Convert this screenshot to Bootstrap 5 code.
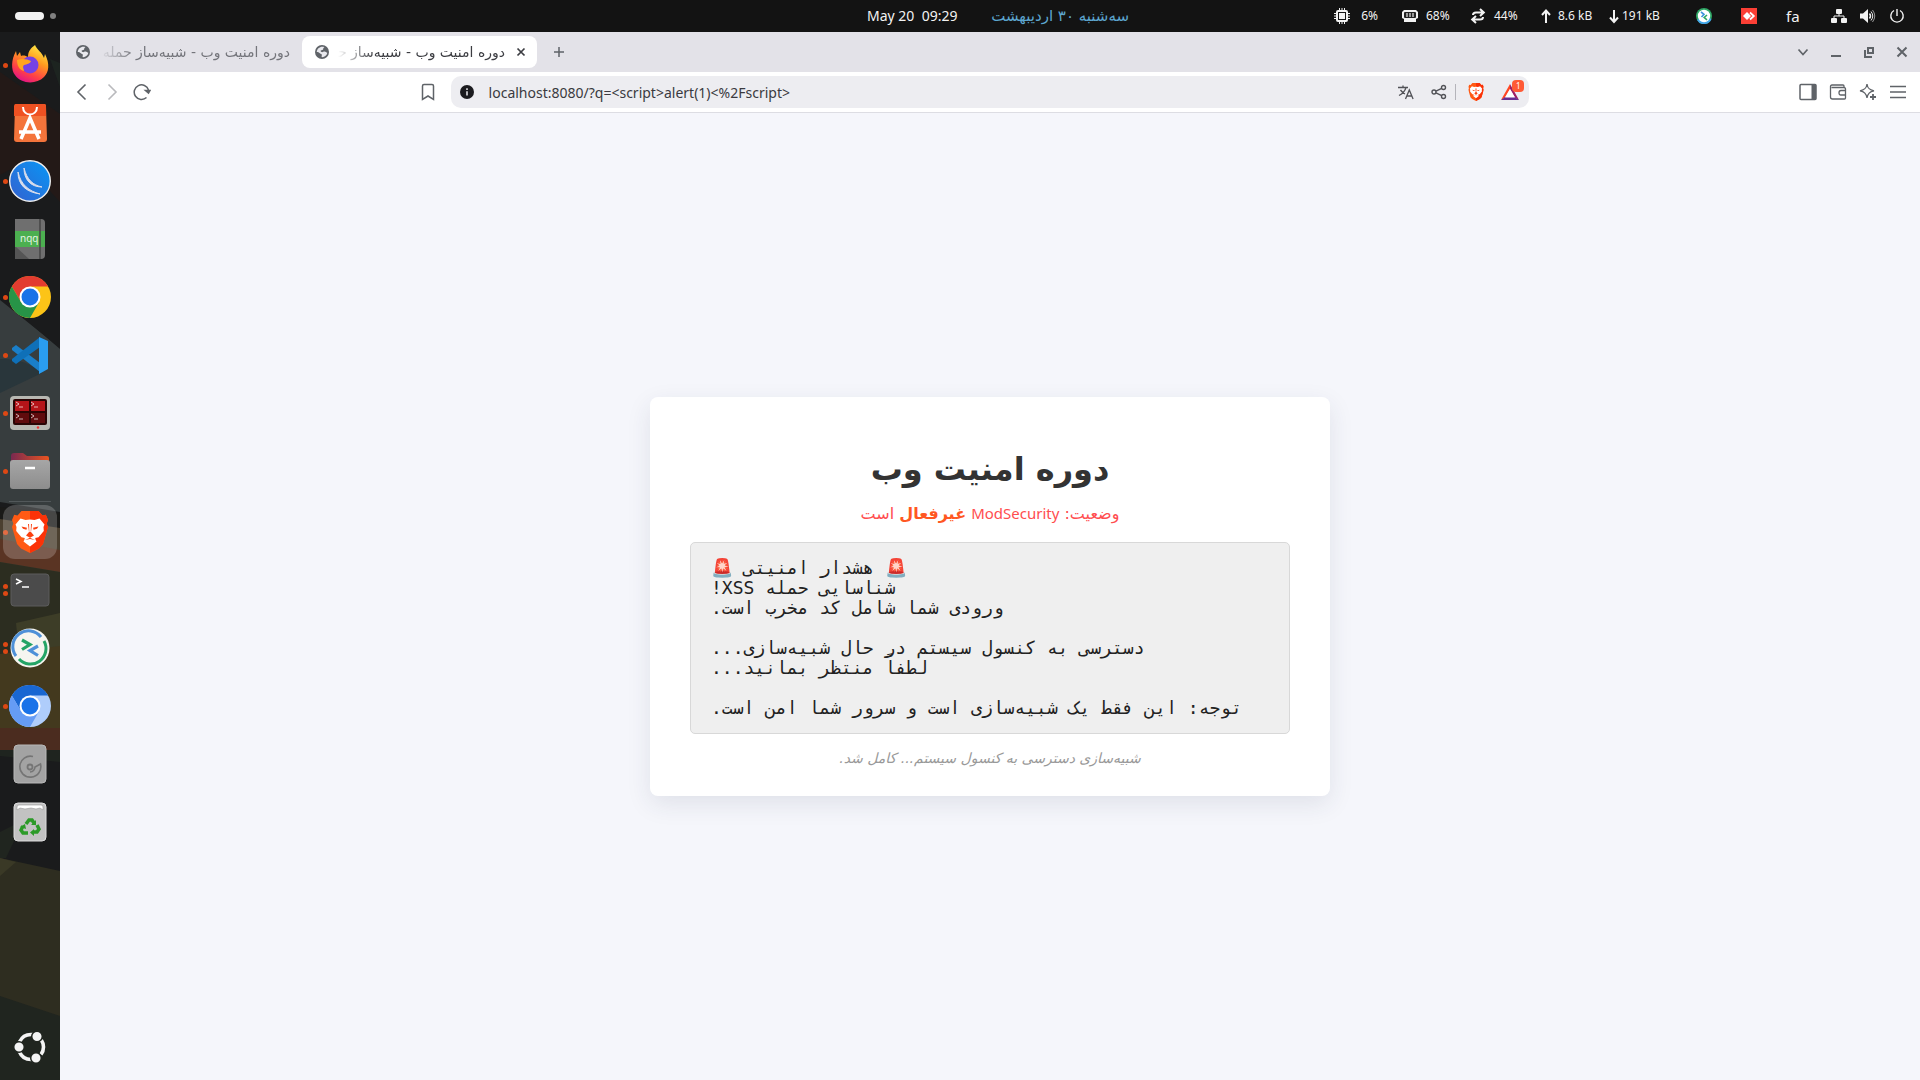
<!DOCTYPE html>
<html lang="fa">
<head>
<meta charset="utf-8">
<meta name="viewport" content="width=device-width, initial-scale=1">
<title>دوره امنیت وب</title>
<link href="https://cdn.jsdelivr.net/npm/bootstrap@5.3.0/dist/css/bootstrap.min.css" rel="stylesheet">
<style>
  body { font-family: "Noto Sans", "DejaVu Sans", sans-serif; background: #f5f6fb; overflow: hidden; }
  svg { display: block; flex: none; }
  button { border: 0; background: none; padding: 0; color: inherit; display: flex; align-items: center; justify-content: center; }

  /* system bar */
  .sysbar { height: 32px; background: #131313; color: #f2f2f2; font-size: 13px; line-height: 20px; }
  .ws-on { width: 29px; height: 8px; border-radius: 4px; background: #f2f2f2; margin-left: 15px; }
  .ws-off { width: 6px; height: 6px; border-radius: 50%; background: #808080; margin-left: 6px; }
  .clock { width: 262px; margin-right: 205px; font-size: 14px; }
  .clock-fa { color: #5da6cf; font-family: "DejaVu Sans", sans-serif; font-size: 15px; }
  .tray { width: 586px; font-size: 12px; }
  .stat { width: 68px; }
  .stat-wide { width: 90px; }
  .slot { width: 45px; }
  .slot-sm { width: 29px; }
  .lang { font-size: 15px; }

  /* dock */
  .dock { width: 60px; background: #1a1b1c; padding-top: 4px; }
  .dock-art { position: absolute; inset: 0; width: 100%; height: 100%; }
  .dock-item { height: 58px; width: 60px; position: relative; flex: none; }
  .dock-item.running::before, .dock-item.twice::before, .dock-item.twice::after {
    content: ""; position: absolute; left: 3px; top: 27px; width: 5px; height: 5px; border-radius: 50%; background: #dd4814; }
  .dock-item.twice::before { top: 23px; }
  .dock-item.twice::after { top: 30px; }
  .dock-rule { height: 1px; margin: 1px 9px; background: #52585a; position: relative; }
  .dock-item.current > svg { position: relative; }
  .current-bg { position: absolute; inset: 2px 3px; border-radius: 12px; background: rgba(255,255,255,.2); }

  /* browser */
  .tabstrip { height: 40px; background: #e3e2e8; color: #5f6368; }
  .win-controls { gap: 17px; margin-right: 10px; }
  .tab { height: 32px; border-radius: 8px; font: 14px/20px "DejaVu Sans", sans-serif; }
  .tab-idle { width: 234px; padding: 0 12px 0 8px; margin-left: 8px; color: #74757b; }
  .tab-live { width: 235px; padding: 0 8px 0 13px; background: #fff; color: #3c3d42; }
  .tab-text { overflow: hidden; white-space: nowrap; direction: rtl; flex: 1; min-width: 0; margin-left: 9px;
    -webkit-mask-image: linear-gradient(to right, transparent, #000 36px); mask-image: linear-gradient(to right, transparent, #000 36px); }
  .toolbar { height: 41px; background: #fff; border-bottom: 1px solid #dddde3; color: #5f6368; }
  .side { flex: 0 0 21%; gap: 12px; padding: 0 13px; }
  .omni { flex: 0 0 58%; height: 32px; border-radius: 10px; background: #ededf1; padding: 0 10px 0 8px; color: #515257; }
  .omni input { border: 0; background: none; outline: 0; flex: 1; min-width: 0; padding: 0; margin-left: 14px; font-size: 14px; color: #3a3a40; }
  .omni-rule { width: 1px; height: 16px; background: #b4b4ba; }
  .shield { margin: 0 17px 0 12px; }
  .bat { position: relative; }
  .bat-count { position: absolute; left: 11px; top: -4px; width: 12px; height: 12px; border-radius: 4px; background: #ff5a36; color: #fff; font-size: 8px; line-height: 12px; text-align: center; }

  /* page */
  .panel { width: 680px; border: 0; border-radius: 8px; padding: 52px 40px 26px; box-shadow: 0 8px 24px rgba(40,45,80,.1); font-family: "DejaVu Sans", sans-serif; }
  .panel h1 { font-size: 32px; line-height: 40px; font-weight: 700; color: #333; margin-bottom: 12px; }
  .state { font-size: 16px; line-height: 24px; color: #ff4d4f; margin-bottom: 16px; }
  .state b { color: #ff5722; }
  .state bdi { font-family: "Noto Sans", sans-serif; font-size: 15px; }
  .console { direction: rtl; text-align: left; font: 18px/20px "DejaVu Sans Mono", monospace; color: #222; background: #efefef; border: 1px solid #d8d8d8; border-radius: 5px; padding: 15px 20px; margin-bottom: 12px; overflow: hidden; }
  .done { font-size: 14px; line-height: 24px; color: #999; font-style: italic; }
</style>
<script src="https://cdn.jsdelivr.net/npm/bootstrap@5.3.0/dist/js/bootstrap.bundle.min.js"></script>
</head>
<body class="vh-100 d-flex flex-column">

<svg width="0" height="0" class="position-absolute" aria-hidden="true">
  <symbol id="globe" viewBox="0 0 16 16"><circle cx="8" cy="8" r="8" fill="#5f6368"/><path d="M2 8c1.500 0 2.500.5 3.500 1.500s2.300.5 2.300 2-.8 2.200.4 2.500c3-.2 5.500-2.500 5.900-5.200-1.300 0-1.800-1.300-3.200-1.300S8.600 8.600 7.400 8 6 6.300 7.400 6s2-.4 2-1.600.8-1.600 1.400-1.900C6.500.8 2.200 4 2 8z" fill="#e9e9ee"/></symbol>
  <symbol id="lion" viewBox="0 0 36 42"><path d="M9.500 0h17l4 4.500 3.300-.7L36 9l-1.300 3.500L36 16l-5 17-4 4.500-9 4.500-9-4.500L5 33 0 16l1.300-3.500L0 9l2.200-5.200 3.300.7z" fill="#ff5a14"/><path d="M18 0h8.500l4 4.500 3.300-.7L36 9l-1.300 3.500L36 16l-5 17-4 4.500-9 4.500z" fill="#fb3208"/><path d="M18 8.500l4.500.6 5-1.600 5 6-1 2.500.3 4-5.300 6.300-3.300.7.500 2 .8 1.500-6.500 5-6.500-5 .8-1.500.5-2-3.300-.7L4.200 20l.3-4-1-2.500 5-6 5 1.600z" fill="#fff"/><path d="M9.500 15.500l5.500 1.300-.6 2-3.400-1zM26.500 15.500L21 16.800l.6 2 3.400-1zM16 13h4l-1 8 3 3.500-4 2.300-4-2.300 3-3.500zM13 29l5-2.200 5 2.200-5-1z" fill="#fb4010"/><path d="M17 12h2l-.3 9h-1.400z" fill="#fff"/></symbol>
</svg>

<header class="sysbar d-flex align-items-center flex-shrink-0">
  <div class="d-flex align-items-center flex-grow-1"><span class="ws-on"></span><span class="ws-off"></span></div>
  <div class="clock d-flex justify-content-between">
    <span>May 20 &nbsp;09:29</span><span class="clock-fa" dir="rtl">سه‌شنبه ۳۰ اردیبهشت</span>
  </div>
  <div class="tray d-flex align-items-center">
    <div class="stat d-flex align-items-center"><svg width="16" height="16" viewBox="0 0 16 16"><path d="M5.500 0v16M8 0v16M10.500 0v16M0 5.500h16M0 8h16M0 10.500h16" stroke="#f2f2f2"/><rect x="2" y="2" width="12" height="12" rx="2" fill="#f2f2f2"/><rect x="4" y="4" width="8" height="8" fill="#131313"/><rect x="5" y="5" width="6" height="6" fill="#f2f2f2"/></svg><span class="ms-auto me-4">6%</span></div>
    <div class="stat d-flex align-items-center"><svg width="16" height="16" viewBox="0 0 16 16"><path d="M2 2h12l2 2v6l-2 1v3H2v-3l-2-1V4z" fill="#f2f2f2"/><rect x="2" y="4" width="12" height="6" rx="1" fill="#222"/><path d="M5 5v4M8 5v4M11 5v4" stroke="#999" stroke-width="2"/></svg><span class="ms-2">68%</span></div>
    <div class="stat d-flex align-items-center"><svg width="16" height="16" viewBox="0 0 16 16" fill="none" stroke="#f2f2f2" stroke-width="2"><path d="M3 7c0-2 1-2.500 3-2.500h8M10 1l3.800 3.500L10 8M13 9c0 2-1 2.500-3 2.500H2M6 8l-3.800 3.500L6 15"/></svg><span class="ms-2">44%</span></div>
    <div class="stat d-flex align-items-center"><svg width="16" height="16" viewBox="0 0 16 16" fill="none" stroke="#f2f2f2" stroke-width="2"><path d="M8 15V3M4 7l4-4.500L12 7"/></svg><span class="ms-1 text-nowrap">8.6 kB</span></div>
    <div class="stat-wide d-flex align-items-center"><svg width="16" height="16" viewBox="0 0 16 16" fill="none" stroke="#f2f2f2" stroke-width="2"><path d="M8 2v12M4 9.500L8 14l4-4.500"/></svg><span class="text-nowrap">191 kB</span></div>
    <div class="slot"><svg width="16" height="16" viewBox="0 0 16 16"><circle cx="8" cy="8" r="8" fill="#2fa866"/><path d="M1 12a8 8 0 0 0 14.500-1L8 8z" fill="#43a5e8"/><circle cx="8" cy="8" r="6.200" fill="#fff"/><path d="M5 4l3 2.300L5.500 9" fill="none" stroke="#3e94dc" stroke-width="1.600"/><path d="M11 7L8.200 9.500l2.800 2.300" fill="none" stroke="#2fa866" stroke-width="1.600"/></svg></div>
    <div class="slot"><svg width="16" height="16" viewBox="0 0 16 16"><path d="M0 0h16v16H0z" fill="#fb3f35"/><path d="M2 8l4-4 4 4-4 4z" fill="#fff"/><path d="M9 4.500L12.800 8 9 11.500" fill="none" stroke="#fff" stroke-width="1.800"/></svg></div>
    <div class="slot lang">fa</div>
    <div class="slot-sm"><svg width="16" height="16" viewBox="0 0 16 16" fill="#f2f2f2"><rect x="5" y="1" width="6" height="5" rx="1"/><rect x="0" y="10" width="6" height="5" rx="1"/><rect x="10" y="10" width="6" height="5" rx="1"/><path d="M3 10V8h10v2M8 5v3" fill="none" stroke="#f2f2f2"/></svg></div>
    <div class="slot-sm"><svg width="16" height="16" viewBox="0 0 16 16" fill="none" stroke="#f2f2f2"><path d="M0 5.500h3L8 1v14l-5-4.500H0z" fill="#f2f2f2" stroke="none"/><path d="M9.500 5.500q2 2.500 0 5" stroke-width="1.500"/><path d="M11 3.500q3.500 4.500 0 9"/><path d="M12.500 2q4.500 6 0 12" opacity=".6"/></svg></div>
    <svg width="16" height="16" viewBox="0 0 16 16" fill="none" stroke="#f2f2f2" stroke-width="1.400"><path d="M5 2.500a6.200 6.200 0 1 0 6 0M8 1v7"/></svg>
  </div>
</header>

<div class="d-flex flex-grow-1 overflow-hidden">
  <nav class="dock position-relative d-flex flex-column flex-shrink-0" aria-label="Dock">
    <svg class="dock-art" viewBox="0 0 60 1048" preserveAspectRatio="none" aria-hidden="true">
      <path d="M0 0h60v1048H0z" fill="#1a1b1c"/><path d="M50 27l10 4v24z" fill="#1d2420"/>
      <path d="M0 40l60 42v88L24 130 0 143z" fill="#231917"/><path d="M0 268l60 48v164L0 470z" fill="#373d3e"/>
      <path d="M26 288h34v29z" fill="#1a1b1c"/><path d="M0 327q25-1 42 14L0 361z" fill="#29363b"/>
      <path d="M0 475l60 6v20L0 489z" fill="#1a1a18"/><path d="M0 487l60 9v80H0z" fill="#4b4030"/><path d="M0 507l60 11v22L0 530z" fill="#5a3423"/>
      <path d="M0 530l60 10v95H0z" fill="#2c2d20"/><path d="M16 591l44-10v50H20z" fill="#3d3d27"/>
      <path d="M0 622l60-8v82H0z" fill="#43391e"/><path d="M0 696h60v22L0 722z" fill="#4b2c1f"/>
      <path d="M0 718h60v12L0 724z" fill="#1f241f"/><path d="M0 800l24-12L6 826H0z" fill="#20251f"/>
      <path d="M0 826l60 13v150L0 968z" fill="#2e2d20"/><path d="M0 826l16 4L0 844z" fill="#3a3926"/><path d="M0 964l60 20v64H0z" fill="#20251f"/>
    </svg>
    <button class="dock-item running" aria-label="Firefox"><svg width="42" height="42" viewBox="0 0 42 42"><defs><linearGradient id="ff" x1=".8" y1="0" x2=".3" y2="1"><stop offset="0" stop-color="#fff14a"/><stop offset=".4" stop-color="#ff9a1f"/><stop offset=".75" stop-color="#ff3f47"/><stop offset="1" stop-color="#e0128a"/></linearGradient></defs><path d="M26 1c2 5 7 7 9 13l1-4c5 10 4 18-1 23-8 8-23 7-29-2C2 26 2 16 7 7l1 5 3-4 1 4c3-1 5 0 7 1 0-6 3-9 7-12z" fill="url(#ff)"/><circle cx="21" cy="21" r="8.500" fill="#7542e5"/><path d="M8 16c5-2 10-1 14 1-1 3-4 3-7 4-2 2 0 4 0 6-5-1-7-6-7-11z" fill="#ffa51e"/></svg></button>
    <button class="dock-item" aria-label="App Center"><svg width="42" height="42" viewBox="0 0 42 42"><path d="M7 2h28q2 0 2 2l1 33q0 3-3 3H8q-3 0-3-3L6 4q0-2 1-2z" fill="#f4743b"/><path d="M7 2h28q2 0 2 2v10H5V4q0-2 2-2z" fill="#ef5122"/><path d="M14 5c0 10 14 10 14 0" fill="none" stroke="#fff" stroke-width="2"/><path d="M12 37l9-21 9 21M10 30h22" fill="none" stroke="#fff" stroke-width="3.500"/></svg></button>
    <button class="dock-item running" aria-label="Winbox"><svg width="42" height="42" viewBox="0 0 42 42"><defs><linearGradient id="wb" x1="1" y1="0" x2="0" y2="1"><stop stop-color="#0897f5"/><stop offset="1" stop-color="#3460cf"/></linearGradient></defs><circle cx="21" cy="21" r="20.300" fill="url(#wb)" stroke="#eee" stroke-width="1.400"/><path d="M9 12c0 13 8 20 22 22C20 31 12 25 9 12zM15 8c0 12 7 19 18 19C24 25 18 20 15 8z" fill="#d8ddec" stroke="#d8ddec"/></svg></button>
    <button class="dock-item" aria-label="Notepadqq"><svg width="42" height="42" viewBox="0 0 42 42"><path d="M6 1h26q4 0 4 4v32q0 4-4 4H6z" fill="#6f6f6f"/><path d="M6 28l14 13H6z" fill="#555"/><path d="M6 13h30v16H6z" fill="#4caf50"/><path d="M31 1v40" stroke="#444" stroke-width="1.500"/><text x="11" y="24" font-family="Noto Sans" font-size="10" fill="#e5f5e5">nqq</text></svg></button>
    <button class="dock-item running" aria-label="Chrome"><svg width="42" height="42" viewBox="0 0 42 42"><circle cx="21" cy="21" r="21" fill="#fcc417"/><path d="M2.800 10.500A21 21 0 0 1 39.200 10.500H21L12 26z" fill="#e23c30"/><path d="M2.800 10.500A21 21 0 0 0 21 42l9.100-15.800L12 26z" fill="#279447"/><circle cx="21" cy="21" r="10.500" fill="#fff"/><circle cx="21" cy="21" r="8.500" fill="#1a73e8"/></svg></button>
    <button class="dock-item running" aria-label="VS Code"><svg width="42" height="42" viewBox="0 0 42 42"><path d="M3 14l4-3 24 18v9L3 16z" fill="#1a7fc9"/><path d="M3 27l4 3 24-17V3L3 25z" fill="#0f70b8"/><path d="M30 3l9 4v28l-9 5z" fill="#2a9df0"/></svg></button>
    <button class="dock-item running" aria-label="Terminator"><svg width="42" height="42" viewBox="0 0 42 42"><rect x="1" y="4" width="40" height="34" rx="4" fill="#b8b8b2"/><rect x="4" y="7" width="34" height="26" rx="2" fill="#2a0505"/><path d="M6 9h14v10H6zM22 9h14v10H22z" fill="#b51419"/><path d="M6 21h14v10H6zM22 21h14v10H22z" fill="#600b0d"/><path d="M7 10l3 2-3 2m3 1h4M22 10l3 2-3 2m3 1h4M7 22l3 2-3 2m3 1h4M22 22l3 2-3 2m3 1h4" fill="none" stroke="#fff" stroke-width=".8" opacity=".85"/><circle cx="29" cy="35.500" r="1.200" fill="#e33"/></svg></button>
    <button class="dock-item running" aria-label="Files"><svg width="42" height="42" viewBox="0 0 42 42"><defs><linearGradient id="fo"><stop stop-color="#7a2950"/><stop offset="1" stop-color="#e95420"/></linearGradient><linearGradient id="gr" x2="0" y2="1"><stop stop-color="#a6a6a6"/><stop offset="1" stop-color="#8d8d8d"/></linearGradient></defs><path d="M2 6q0-3 3-3h9l4 3h20q2 0 2 2v10H2z" fill="url(#fo)"/><rect x="1" y="10" width="40" height="29" rx="3" fill="url(#gr)"/><path d="M16 18h10" stroke="#fff" stroke-width="2.500"/></svg></button>
    <div class="dock-rule flex-shrink-0"></div>
    <button class="dock-item current running" aria-label="Brave"><span class="current-bg"></span><svg width="36" height="42"><use href="#lion"/></svg></button>
    <button class="dock-item twice" aria-label="Terminal"><svg width="42" height="42" viewBox="0 0 42 42"><rect x="2" y="5" width="38" height="32" rx="3" fill="#4b4b4b" stroke="#5c5c5c"/><path d="M7 10l5 2.500L7 15M13 18h7" fill="none" stroke="#fff" stroke-width="1.500"/></svg></button>
    <button class="dock-item twice" aria-label="Remmina"><svg width="42" height="42" viewBox="0 0 42 42"><circle cx="21" cy="21" r="19.500" fill="#f6f5f0"/><path d="M7 29A15.500 15.500 0 0 1 32 10" fill="none" stroke="#4e90d8" stroke-width="3"/><path d="M35 14A15.500 15.500 0 0 1 10 32" fill="none" stroke="#24a466" stroke-width="3"/><path d="M13 13l8 4.500-8 5" fill="none" stroke="#24a466" stroke-width="3.200"/><path d="M29 19l-8 4.500 8 5" fill="none" stroke="#4e90d8" stroke-width="3.200"/></svg></button>
    <button class="dock-item running" aria-label="Chromium"><svg width="42" height="42" viewBox="0 0 42 42"><circle cx="21" cy="21" r="21" fill="#afcdfb"/><path d="M2.800 10.500A21 21 0 0 1 39.200 10.500H21L12 26z" fill="#1967d2"/><path d="M2.800 10.500A21 21 0 0 0 21 42l9.100-15.800L12 26z" fill="#659cf5"/><circle cx="21" cy="21" r="10.500" fill="#fff"/><circle cx="21" cy="21" r="8.500" fill="#1a73e8"/></svg></button>
    <button class="dock-item" aria-label="Disk"><svg width="42" height="42" viewBox="0 0 42 42"><rect x="5" y="2" width="32" height="38" rx="4" fill="#a3a3a3" stroke="#b8b8b8"/><path d="M24 13.500A10.500 10.500 0 1 0 31.500 21L26 24A5.500 5.500 0 0 1 21 29" fill="none" stroke="#757575" stroke-width="1.600"/><circle cx="21" cy="24" r="2.500" fill="none" stroke="#757575" stroke-width="1.800"/></svg></button>
    <button class="dock-item" aria-label="Trash"><svg width="42" height="42" viewBox="0 0 42 42"><rect x="5" y="2" width="32" height="38" rx="4" fill="#c2c2c2" stroke="#ddd"/><path d="M8 9V6q0-2 2-2h22q2 0 2 2v3l-3-2-4 1-5-1-6 1-5-1z" fill="#fff" stroke="#999" stroke-width=".6"/><path d="M17 23l3-4h3l2 3M28 24l2 4-2 3h-3M19 32h-5l-2-3 2-4" fill="none" stroke="#2c9a28" stroke-width="3.500"/><path d="M22 24l5 0 0-5zM25 28v7l-4-3.500zM11 26l5-3 1 5z" fill="#2c9a28"/></svg></button>
    <button class="dock-item mt-auto mb-1" aria-label="Show apps"><svg width="32" height="32" viewBox="0 0 32 32"><g fill="none" stroke="#f4f4f4" stroke-width="3.600"><circle cx="17" cy="16" r="12.500" stroke-dasharray="16 10.180" stroke-dashoffset="8"/></g><g fill="#f4f4f4" stroke="#20251f" stroke-width="1.500"><circle cx="5" cy="16" r="5.300"/><circle cx="23" cy="5.500" r="5.300"/><circle cx="22" cy="27" r="5.300"/></g></svg></button>
  </nav>

  <div class="d-flex flex-column flex-grow-1">
    <div class="tabstrip d-flex align-items-center flex-shrink-0" role="tablist">
      <div class="tab tab-idle d-flex align-items-center" role="tab"><svg width="14" height="14"><use href="#globe"/></svg><span class="tab-text">دوره امنیت وب - شبیه‌ساز حمله</span></div>
      <div class="tab tab-live d-flex align-items-center" role="tab" aria-selected="true"><svg width="14" height="14"><use href="#globe"/></svg><span class="tab-text">دوره امنیت وب - شبیه‌ساز حمله</span><button class="ms-2" aria-label="Close tab"><svg width="16" height="16" viewBox="0 0 16 16" stroke="#3c3d42" stroke-width="1.700"><path d="M4.500 4.500l7 7m0-7l-7 7"/></svg></button></div>
      <button class="ms-3" aria-label="New tab"><svg width="12" height="12" viewBox="0 0 12 12" stroke="currentColor" stroke-width="1.500"><path d="M6 1v10M1 6h10"/></svg></button>
      <div class="win-controls d-flex align-items-center ms-auto">
        <button aria-label="Search tabs"><svg width="16" height="16" viewBox="0 0 16 16" fill="none" stroke="currentColor" stroke-width="1.700"><path d="M3.500 5.500L8 10.500l4.500-5"/></svg></button>
        <button aria-label="Minimize"><svg width="16" height="16" viewBox="0 0 16 16"><path d="M3 11h10v2H3z" fill="currentColor"/></svg></button>
        <button aria-label="Restore"><svg width="16" height="16" viewBox="0 0 16 16" fill="none" stroke="currentColor" stroke-width="2"><path d="M7 4h5v5H7zM4 6v7h7"/></svg></button>
        <button aria-label="Close"><svg width="16" height="16" viewBox="0 0 16 16" stroke="currentColor" stroke-width="2"><path d="M3.500 3.500l9 9m0-9l-9 9"/></svg></button>
      </div>
    </div>

    <div class="toolbar d-flex align-items-center flex-shrink-0">
      <div class="side d-flex align-items-center">
        <button aria-label="Back"><svg width="18" height="18" viewBox="0 0 18 18" fill="none" stroke="currentColor" stroke-width="1.600"><path d="M12.500 1.500L5 9l7.500 7.500"/></svg></button>
        <button aria-label="Forward"><svg width="18" height="18" viewBox="0 0 18 18" fill="none" stroke="#b9babd" stroke-width="1.600"><path d="M5.500 1.500L13 9l-7.500 7.500"/></svg></button>
        <button aria-label="Reload"><svg width="18" height="18" viewBox="0 0 18 18" fill="none" stroke="currentColor" stroke-width="1.500"><path d="M15.500 7A7.300 7.300 0 1 0 13.500 14.500"/><path d="M12.500 7.500h4.500l-1.500 2.500z" fill="currentColor"/></svg></button>
        <button class="ms-auto" aria-label="Bookmark"><svg width="20" height="18" viewBox="0 0 20 18" fill="none" stroke="currentColor" stroke-width="1.500"><path d="M4.500 3q0-1.500 1.500-1.500h8q1.500 0 1.500 1.500v13.500L10 13l-5.500 3.500z"/></svg></button>
      </div>
      <div class="omni d-flex align-items-center">
        <svg width="16" height="16" viewBox="0 0 16 16"><circle cx="8" cy="8" r="7" fill="#1b1b1f"/><path d="M8 7.200v4.300M8 4.300v1.600" stroke="#ededf1" stroke-width="1.500"/></svg>
        <input type="text" aria-label="Address" value="localhost:8080/?q=&lt;script&gt;alert(1)&lt;%2Fscript&gt;">
        <button class="me-3" aria-label="Translate"><svg width="18" height="18" viewBox="0 0 18 18" fill="none" stroke="currentColor" stroke-width="1.300"><path d="M1 4.500h10M6 2.500v2M9 4.500C8 8 5 11 2 12.500M3.500 7C5 9 6 10 8 11M8.500 16l3.800-9 3.800 9M10 13h5"/></svg></button>
        <button class="me-2" aria-label="Share"><svg width="16" height="16" viewBox="0 0 16 16" fill="none" stroke="currentColor" stroke-width="1.400"><circle cx="3" cy="8" r="2"/><circle cx="12.500" cy="3.500" r="2"/><circle cx="12.500" cy="12.500" r="2"/><path d="M5 7.200l5.700-2.900M5 8.800l5.700 2.900"/></svg></button>
        <span class="omni-rule"></span>
        <button class="shield" aria-label="Shields"><svg width="16" height="18" viewBox="0 0 36 42"><use href="#lion"/></svg></button>
        <button class="bat" aria-label="Rewards"><svg width="18" height="16" viewBox="0 0 18 16"><path d="M9 0L0 16l4-2.500L9 5z" fill="#ff4724"/><path d="M9 0l9 16-4-2.500L9 5z" fill="#9e1f63"/><path d="M0 16h18l-4-3H4z" fill="#662d91"/><path d="M9 5l5 8.500H4z" fill="#fff"/></svg><span class="bat-count">1</span></button>
      </div>
      <div class="side d-flex align-items-center justify-content-end">
        <button aria-label="Sidebar"><svg width="18" height="18" viewBox="0 0 18 18"><rect x="1" y="1.500" width="16" height="15" rx="1" fill="none" stroke="currentColor" stroke-width="1.500"/><path d="M12.500 1.500H17v15h-4.500z" fill="currentColor"/></svg></button>
        <button aria-label="Wallet"><svg width="18" height="18" viewBox="0 0 18 18" fill="none" stroke="currentColor" stroke-width="1.300"><path d="M15 4.500V3q0-1-1-1H3Q1.500 2 1.500 3.500V14q0 2 2 2h12q1 0 1-1V6q0-1.500-1.500-1.500H2.500M16.500 7.500H12q-2 0-2 2.300t2 2.200h4.500"/></svg></button>
        <button aria-label="Leo AI"><svg width="18" height="18" viewBox="0 0 18 18" fill="none" stroke="currentColor" stroke-width="1.300"><path d="M8 1c.6 4.500 2.500 6 7 6.800C10.500 8.500 8.600 10.500 8 15 7.400 10.500 5.500 8.500 1 7.800 5.500 7 7.400 5.500 8 1z"/><path d="M14 11v6M11 14h6" stroke-width="1.800"/></svg></button>
        <button aria-label="Menu"><svg width="18" height="18" viewBox="0 0 18 18" stroke="currentColor" stroke-width="1.500"><path d="M1 3.500h16M1 9h16M1 14.500h16"/></svg></button>
      </div>
    </div>

    <main class="flex-grow-1 d-flex align-items-center justify-content-center">
      <section class="card panel text-center">
        <h1 dir="rtl">دوره امنیت وب</h1>
        <p class="state" dir="rtl">وضعیت: <bdi>ModSecurity</bdi> <b>غیرفعال</b> است</p>
<pre class="console">🚨 هشدار امنیتی 🚨
شناسایی حمله XSS!
ورودی شما شامل کد مخرب است.

دسترسی به کنسول سیستم در حال شبیه‌سازی...
لطفاً منتظر بمانید...

توجه: این فقط یک شبیه‌سازی است و سرور شما امن است.</pre>
        <p class="done mb-0" dir="rtl">شبیه‌سازی دسترسی به کنسول سیستم... کامل شد.</p>
      </section>
    </main>
  </div>
</div>
</body>
</html>
